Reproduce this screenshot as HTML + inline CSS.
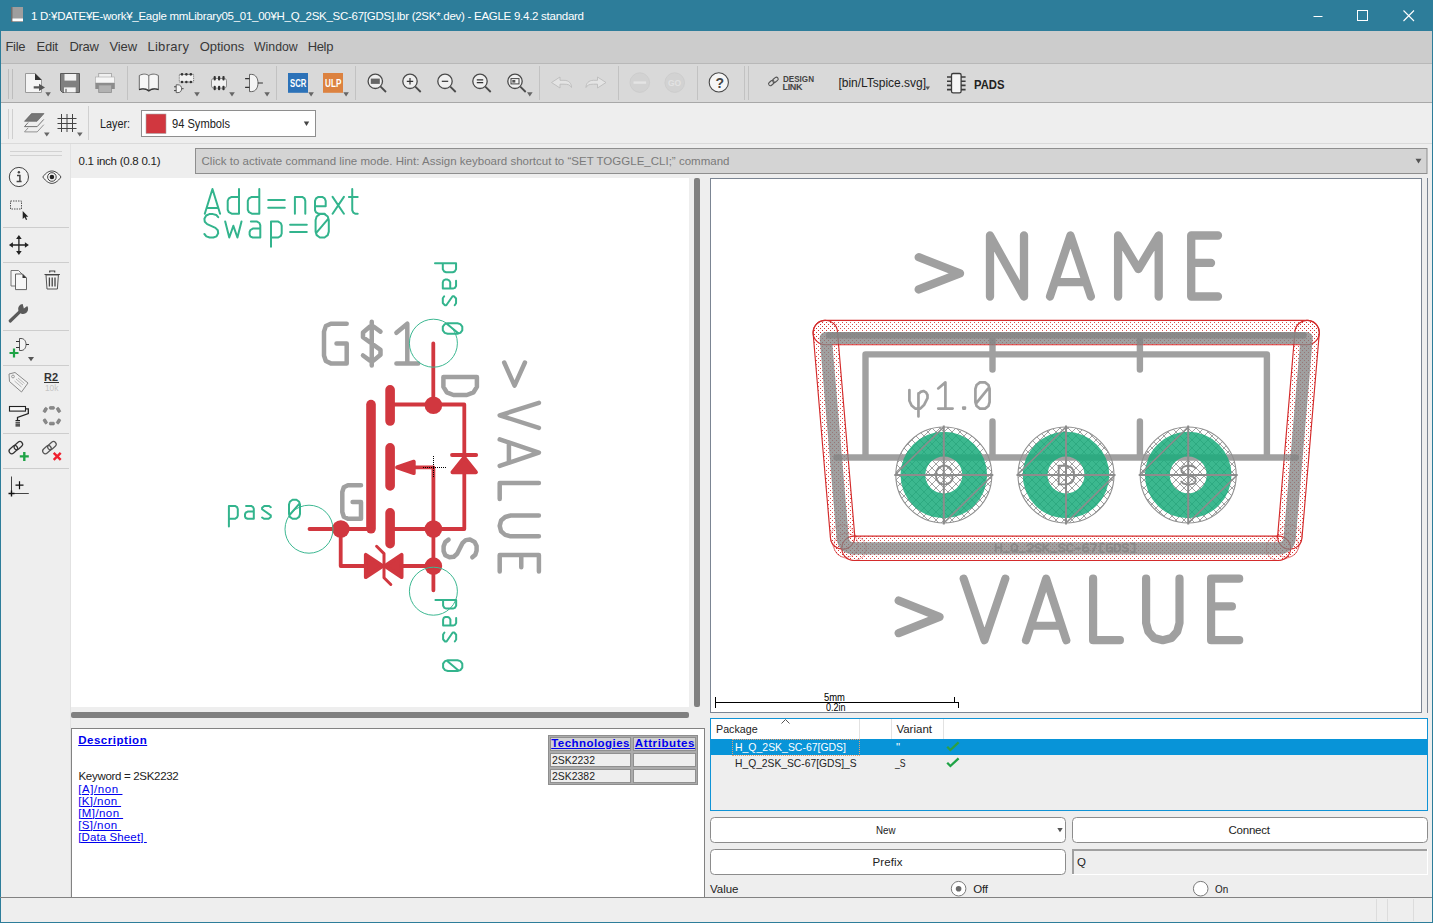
<!DOCTYPE html>
<html><head><meta charset="utf-8"><title>EAGLE</title>
<style>
html,body{margin:0;padding:0;}
body{width:1433px;height:923px;overflow:hidden;position:relative;background:#eeeeee;font-family:"Liberation Sans",sans-serif;}
.a{position:absolute;}
.t{position:absolute;white-space:pre;line-height:20px;height:20px;font-family:"Liberation Sans",sans-serif;}
svg{position:absolute;overflow:visible;}
</style></head><body>
<!-- window frame / title / menu / toolbars -->
<div class="a" style="left:0;top:0;width:1433px;height:31px;background:#2d7d9a"></div>
<div class="a" style="left:0;top:31px;width:1433px;height:33px;background:#cccccc"></div>
<div class="a" style="left:0;top:64px;width:1433px;height:38px;background:#d9d9d9"></div>
<div class="a" style="left:0;top:63px;width:1433px;height:1px;background:#b8b8b8"></div>
<div class="a" style="left:0;top:102px;width:1433px;height:1px;background:#a8a8a8"></div>
<div class="a" style="left:0;top:103px;width:1433px;height:40px;background:#eeeeee"></div>
<div class="a" style="left:0;top:143px;width:1433px;height:1px;background:#dadada"></div>
<!-- window border -->
<div class="a" style="left:0;top:0;width:1px;height:923px;background:#2d7d9a"></div>
<div class="a" style="left:1432px;top:0;width:1px;height:923px;background:#2d7d9a"></div>
<div class="a" style="left:0;top:922px;width:1433px;height:1px;background:#2d7d9a"></div>
<!-- title icon -->
<svg style="left:11px;top:7px" width="12" height="15" viewBox="0 0 12 15"><rect x="0" y="0" width="12" height="15" fill="#9e9e9e"/><rect x="0" y="0" width="1.5" height="15" fill="#6e6e6e"/><rect x="1.5" y="11.5" width="10.5" height="2.5" fill="#ffffff"/></svg>
<!-- window controls -->
<svg style="left:1300px;top:0" width="133" height="31" viewBox="0 0 133 31">
<path d="M13.5 16.5H22.5" stroke="#fff" stroke-width="1"/>
<rect x="57.5" y="10.5" width="10" height="10" fill="none" stroke="#fff" stroke-width="1"/>
<path d="M103.5 10.5L114 21M114 10.5L103.5 21" stroke="#fff" stroke-width="1.1"/>
</svg>
<!-- top toolbar icons: one overlay svg in page coordinates -->
<svg style="left:0;top:0" width="1433" height="180" viewBox="0 0 1433 180">
<defs>
<path id="dd" d="M0 0H5.6L2.8 4.2Z" fill="#666"/>
</defs>
<!-- grips -->
<path d="M8.5 69V99M12.5 69V99" stroke="#bdbdbd" stroke-width="1"/>
<path d="M8.5 109V139M12.5 109V139" stroke="#cfcfcf" stroke-width="1"/>
<!-- separators toolbar1 -->
<path d="M127.5 66V100M276.5 66V100M355.5 66V100M539.5 66V100M618.5 66V100M697.5 66V100M744.5 66V100M748.5 66V100" stroke="#c2c2c2" stroke-width="1"/>
<!-- new doc -->
<path d="M25.5 73.5H35L41.5 80V92.5H25.5Z" fill="#f4f4f4" stroke="#9a9a9a" stroke-width="1"/>
<path d="M35 73.2L41.8 80H35Z" fill="#333"/>
<path d="M33.7 86.2H39V83.8L45 87.4L39 91V88.6H33.7Z" fill="#555"/>
<use href="#dd" x="45.3" y="92.2"/>
<!-- save -->
<path d="M60.5 73.5H79.5V92.5H62.5L60.5 90.5Z" fill="#808080" stroke="#5a5a5a" stroke-width="1"/>
<rect x="64.5" y="74" width="11.7" height="6.6" fill="#f2f2f2"/>
<rect x="64" y="87.4" width="11.7" height="5" fill="#f2f2f2"/>
<rect x="65.4" y="88.8" width="1.2" height="3.6" fill="#666"/>
<!-- print -->
<rect x="98.7" y="73.5" width="12.8" height="5" fill="#f0f0f0" stroke="#a0a0a0" stroke-width="0.8"/>
<rect x="95.5" y="77" width="19" height="6" fill="#f6f6f6" stroke="#a8a8a8" stroke-width="0.6"/>
<rect x="95.3" y="83" width="19.5" height="6" fill="#8c8c8c"/>
<rect x="98.7" y="85" width="12.8" height="7.5" fill="#b2b2b2" stroke="#909090" stroke-width="0.8"/>
<!-- book -->
<path d="M139.3 75.5C143 73.5 146.5 73.8 148.8 75.6C151.2 73.8 154.7 73.5 158.4 75.5V89.3C154.7 88 151.2 88.4 148.8 90.3C146.5 88.4 143 88 139.3 89.3Z" fill="#f6f6f6" stroke="#5a5a5a" stroke-width="0.9"/>
<path d="M148.8 75.6V90.3" stroke="#5a5a5a" stroke-width="0.9"/>
<path d="M139 89.6C143 88.6 146.3 89 148.8 91C151.3 89 154.6 88.6 158.6 89.6" fill="none" stroke="#333" stroke-width="1.1"/>
<!-- board/schematic icon -->
<rect x="179.3" y="74.4" width="14.3" height="7.6" fill="#f0f0f0" stroke="#555" stroke-width="0.8" stroke-dasharray="1.2 1"/>
<g fill="#333"><circle cx="182" cy="74.3" r="1.35"/><circle cx="186.4" cy="74.3" r="1.35"/><circle cx="190.8" cy="74.3" r="1.35"/><circle cx="182" cy="82" r="1.35"/><circle cx="186.4" cy="82" r="1.35"/><circle cx="190.8" cy="82" r="1.35"/></g>
<path d="M176.2 84.8H178C180.6 84.8 181.6 86.8 181.6 88.7C181.6 90.6 180.6 92.6 178 92.6H176.2Z" fill="#f4f4f4" stroke="#444" stroke-width="0.8"/>
<path d="M174 86.8H176.2M174 90.6H176.2M181.6 88.7H183.6" stroke="#333" stroke-width="0.9"/>
<use href="#dd" x="194.2" y="92.2"/>
<!-- package icon -->
<rect x="211.5" y="78.5" width="15" height="9.6" rx="2.2" fill="#f2f2f2" stroke="#777" stroke-width="0.8"/>
<g fill="#333"><rect x="213.6" y="76" width="2.2" height="4.4" rx="1"/><rect x="218" y="76" width="2.2" height="4.4" rx="1"/><rect x="222.4" y="76" width="2.2" height="4.4" rx="1"/><rect x="213.6" y="85.8" width="2.2" height="4.4" rx="1"/><rect x="218" y="85.8" width="2.2" height="4.4" rx="1"/><rect x="222.4" y="85.8" width="2.2" height="4.4" rx="1"/></g>
<use href="#dd" x="229.2" y="92.2"/>
<!-- gate icon -->
<path d="M249.5 74.4H251.5C256 74.4 258 78.8 258 83C258 87.2 256 91.6 251.5 91.6H249.5Z" fill="#f4f4f4" stroke="#555" stroke-width="0.9"/>
<path d="M245.1 78.6H249.5M245.1 87.4H249.5M258 83H262.9" stroke="#333" stroke-width="1.1"/>
<use href="#dd" x="264.3" y="92.2"/>
<!-- SCR / ULP -->
<rect x="288" y="73" width="20" height="19.8" fill="#2c72b8"/>
<rect x="323" y="73" width="20" height="19.8" fill="#dc8240"/>
<use href="#dd" x="308.3" y="92.2"/>
<use href="#dd" x="343.3" y="92.2"/>
<!-- zoom icons -->
<g fill="none" stroke="#4a4a4a" stroke-width="1.3">
<circle cx="375.3" cy="81.3" r="7.2" fill="#efefef"/><path d="M380.6 86.6L386 92" stroke-width="1.8"/>
<circle cx="410" cy="81.3" r="7.2" fill="#efefef"/><path d="M415.3 86.6L420.7 92" stroke-width="1.8"/>
<circle cx="445" cy="81.3" r="7.2" fill="#efefef"/><path d="M450.3 86.6L455.7 92" stroke-width="1.8"/>
<circle cx="480" cy="81.3" r="7.2" fill="#efefef"/><path d="M485.3 86.6L490.7 92" stroke-width="1.8"/>
<circle cx="515" cy="81.3" r="7.2" fill="#efefef"/><path d="M520.3 86.6L525.7 92" stroke-width="1.8"/>
</g>
<rect x="370.8" y="78.6" width="9" height="5.3" fill="#666"/>
<path d="M406.8 81.3H413.2M410 78.1V84.5" stroke="#333" stroke-width="1.2"/>
<path d="M441.8 81.3H448.2" stroke="#333" stroke-width="1.2"/>
<path d="M476.8 79.9H483.2M476.8 82.7H483.2" stroke="#333" stroke-width="1.2"/>
<rect x="511" y="78.6" width="8" height="5.3" fill="#f4f4f4" stroke="#444" stroke-width="1"/><rect x="512.3" y="80" width="3" height="2.6" fill="#555"/>
<use href="#dd" x="527" y="92.2"/>
<!-- undo / redo (disabled) -->
<path transform="translate(0 1)" d="M551.5 81.5L560 76V79.3H564C569 79.3 571.5 82.5 571.5 86.5C570 83.8 568 83.2 564 83.2H560V87Z" fill="#e4e4e4" stroke="#bcbcbc" stroke-width="0.9"/>
<path transform="translate(0 1)" d="M606 81.5L597.5 76V79.3H593.5C588.5 79.3 586 82.5 586 86.5C587.5 83.8 589.5 83.2 593.5 83.2H597.5V87Z" fill="#e4e4e4" stroke="#bcbcbc" stroke-width="0.9"/>
<!-- stop / go (disabled) -->
<circle cx="639.8" cy="82.6" r="9.8" fill="#d2d2d2" stroke="#cacaca" stroke-width="0.8"/><rect x="633.5" y="81.4" width="12.6" height="2.4" fill="#e4e4e4"/>
<circle cx="674.7" cy="82.6" r="9.8" fill="#d2d2d2" stroke="#cacaca" stroke-width="0.8"/>
<!-- help -->
<circle cx="718.8" cy="82.4" r="9.6" fill="#f6f6f6" stroke="#4a4a4a" stroke-width="1.1"/>
<!-- design link icon -->
<g fill="none" stroke="#555" stroke-width="1.1"><rect x="768.3" y="81.2" width="6.2" height="3.6" rx="1.8" transform="rotate(-40 771.4 83)"/><rect x="772.3" y="78" width="6.2" height="3.6" rx="1.8" transform="rotate(-40 775.4 79.8)"/></g>
<!-- ltspice dropdown -->
<path d="M925.4 86.6H930L927.7 90Z" fill="#555"/>
<!-- PADS icon -->
<rect x="951.5" y="73.5" width="9.6" height="19.4" rx="1.6" fill="#f6f6f6" stroke="#3c3c3c" stroke-width="1.3"/>
<path d="M947 77H951.5M947 81.2H951.5M947 85.4H951.5M947 89.6H951.5M961 77H965.6M961 81.2H965.6M961 85.4H965.6M961 89.6H965.6" stroke="#3c3c3c" stroke-width="1.6"/>
<!-- toolbar2: layers icon -->
<path d="M24.5 121.3L31.5 113.6H44L37 121.3Z" fill="#777" stroke="#555" stroke-width="0.6"/>
<path d="M24.5 126.6L28.2 122.5M37.2 126.6L43.8 119.4M24.5 126.6H37.2" fill="none" stroke="#666" stroke-width="0.9"/>
<path d="M24.5 131.9L28.2 127.8M37.2 131.9L43.8 124.7M24.5 131.9H37.2" fill="none" stroke="#888" stroke-width="0.9"/>
<use href="#dd" x="44" y="132.4"/>
<!-- grid icon -->
<path d="M61.5 114V132M67 114V132M72.5 114V132M57.5 118.5H76.5M57.5 123.5H76.5M57.5 128.5H76.5" stroke="#444" stroke-width="1"/>
<use href="#dd" x="77" y="132.4"/>
<path d="M88.5 106V140" stroke="#d0d0d0" stroke-width="1"/>
<!-- layer combo -->
<rect x="141.5" y="110.5" width="174" height="26" fill="#fff" stroke="#8e8e8e" stroke-width="1"/>
<rect x="146" y="114" width="20" height="19.5" fill="#d1373f" stroke="#a8a8a8" stroke-width="0.6"/>
<path d="M303.8 121.6H309.2L306.5 126Z" fill="#444"/>
<!-- command line -->
<rect x="195.500" y="148.5" width="1231.5" height="25" fill="#d4d4d4" stroke="#8e8e8e" stroke-width="1"/>
<path d="M1415.5 158.8H1421.5L1418.5 163.6Z" fill="#555"/>
</svg>
<!-- left tool palette -->
<svg style="left:0;top:0" width="80" height="923" viewBox="0 0 80 923">
<path d="M10 151.500H62M10 155.500H62" stroke="#d2d2d2" stroke-width="1"/>
<path d="M3 227.500H69M3 262.500H69M3 330.500H69M3 365.500H69M3 433.500H69M3 468.500H69" stroke="#cdcdcd" stroke-width="1"/>
<path d="M70.500 144V897" stroke="#e2e2e2" stroke-width="1"/>
<!-- info -->
<circle cx="18.9" cy="177" r="9.6" fill="#f4f4f4" stroke="#444" stroke-width="1"/>
<circle cx="18.9" cy="172.200" r="1.2" fill="#444"/>
<path d="M17 175.400H19.900V181.400M16.600 181.600H21.600" stroke="#444" stroke-width="1.5" fill="none"/>
<!-- eye -->
<path d="M42.800 177C46 172.300 49.500 171 51.900 171C54.300 171 57.800 172.300 61 177C57.800 181.700 54.300 183.400 51.900 183.400C49.500 183.400 46 181.700 42.800 177Z" fill="#f4f4f4" stroke="#444" stroke-width="1"/>
<circle cx="51.900" cy="177" r="4.300" fill="none" stroke="#444" stroke-width="1"/>
<circle cx="51.900" cy="177" r="2.300" fill="#222"/>
<!-- select -->
<rect x="10.500" y="201" width="11" height="8" fill="none" stroke="#555" stroke-width="1" stroke-dasharray="1.500 1"/>
<path d="M22.700 211V219L24.600 217.200L26 220L27.200 219.400L25.800 216.700H28.300Z" fill="#222"/>
<!-- move -->
<path d="M18.900 237V253M10.900 245H26.900" stroke="#222" stroke-width="1.300"/>
<path d="M18.900 235L21.700 239H16.100ZM18.900 255L21.700 251H16.100ZM8.900 245L12.900 242.200V247.800ZM28.900 245L24.900 242.200V247.800Z" fill="#222"/>
<!-- copy -->
<path d="M11 270.500H18.500L22 274V286H11Z" fill="#f4f4f4" stroke="#666" stroke-width="0.9"/>
<path d="M15.500 274H22.500L26.500 278V289.600H15.500Z" fill="#f6f6f6" stroke="#555" stroke-width="0.9"/>
<path d="M22.500 274L26.500 278H22.500Z" fill="#333"/>
<!-- trash -->
<path d="M46 275H58.400L57.400 289H47Z" fill="#f2f2f2" stroke="#555" stroke-width="1"/>
<path d="M44.500 274.500H59.900M49.700 272.500V271H54.700V272.500" stroke="#444" stroke-width="1.200" fill="none"/>
<path d="M49.400 277.500V286.500M52.200 277.500V286.500M55 277.500V286.500" stroke="#444" stroke-width="1.300"/>
<!-- wrench -->
<path d="M10.200 321L21.500 310.200" stroke="#5a5a5a" stroke-width="3.200" stroke-linecap="round"/>
<path d="M26.800 305.500A5 5 0 1 1 22 304L23.800 308.500L26.800 305.500Z" fill="#5a5a5a" transform="rotate(8 23 309)"/>
<!-- add gate -->
<path d="M19.500 338.500H21C24.500 338.500 26 341.500 26 344.500C26 347.500 24.500 350.500 21 350.500H19.500Z" fill="#f4f4f4" stroke="#444" stroke-width="0.9"/>
<path d="M16 341.500H19.500M16 347.500H19.500M26 344.500H29" stroke="#333" stroke-width="1"/>
<path d="M9.500 353H18.500M14 348.500V357.500" stroke="#1fa346" stroke-width="2.200"/>
<path d="M28 357H34L31 361.300Z" fill="#555"/>
<!-- tag -->
<path d="M9 374L15 372.500L28 383L21.500 392L9.500 381.500Z" fill="#f2f2f2" stroke="#8a8a8a" stroke-width="1"/>
<circle cx="13" cy="376.500" r="1.400" fill="none" stroke="#888" stroke-width="0.800"/>
<path d="M16 379L23 385M14.500 381L21.500 387M18 378L24.500 383.500" stroke="#aaa" stroke-width="0.800"/>
<!-- R2 underline -->
<path d="M44 382.500H59" stroke="#333" stroke-width="1"/>
<!-- paint roller -->
<rect x="9.500" y="406.500" width="16" height="4.600" fill="#f6f6f6" stroke="#222" stroke-width="1.100"/>
<path d="M25.500 408.800H28.300V413.500L17.500 417.500V420" fill="none" stroke="#222" stroke-width="1.300"/>
<path d="M15.500 420.500H20M15.500 422.300H20M15.500 424.100H20M15.500 425.900H20" stroke="#222" stroke-width="1.100"/>
<!-- dotted polygon -->
<g fill="#8a8a8a" stroke="#666" stroke-width="0.5"><rect x="49.400" y="406.500" width="5" height="2.800" rx="0.800"/><rect x="49.400" y="422.200" width="5" height="2.800" rx="0.800"/><rect x="42.800" y="408.600" width="5" height="2.800" rx="0.800" transform="rotate(-60 45.300 410)"/><rect x="56" y="408.600" width="5" height="2.800" rx="0.800" transform="rotate(60 58.500 410)"/><rect x="42.800" y="420" width="5" height="2.800" rx="0.800" transform="rotate(60 45.300 421.400)"/><rect x="56" y="420" width="5" height="2.800" rx="0.800" transform="rotate(-60 58.500 421.400)"/></g>
<!-- link + -->
<g fill="none" stroke="#333" stroke-width="1.200"><rect x="8.600" y="447" width="9.500" height="5.400" rx="2.700" transform="rotate(-42 13.300 449.700)"/><rect x="13.600" y="443" width="9.500" height="5.400" rx="2.700" transform="rotate(-42 18.300 445.700)"/></g>
<path d="M19.800 456.400H28.800M24.300 451.900V460.900" stroke="#1fa346" stroke-width="2.400"/>
<!-- link x -->
<g fill="none" stroke="#555" stroke-width="1.200"><rect x="42.200" y="447" width="9.500" height="5.400" rx="2.700" transform="rotate(-42 46.900 449.700)"/><rect x="47.200" y="443" width="9.500" height="5.400" rx="2.700" transform="rotate(-42 51.900 445.700)"/></g>
<path d="M53.700 452.900L60.700 459.900M60.700 452.900L53.700 459.900" stroke="#f0202e" stroke-width="2.400"/>
<!-- origin mark -->
<path d="M11.500 476.500V496M9.500 493.500H28.800" stroke="#444" stroke-width="1"/>
<path d="M15.500 485.200H23.500M19.500 481.200V489.200" stroke="#111" stroke-width="1.200"/>
<path d="M8.500 493.500H14.500M11.500 490.500V496.500" stroke="#111" stroke-width="1.400"/>
</svg>
<!-- left canvas (symbol) -->
<div class="a" style="left:71px;top:178px;width:618px;height:529px;background:#fff"></div>
<div class="a" style="left:694px;top:178px;width:6px;height:529px;background:#808080;border-radius:2px"></div>
<div class="a" style="left:71px;top:712px;width:618px;height:6px;background:#808080;border-radius:2px"></div>
<svg style="left:0;top:0" width="720" height="720" viewBox="0 0 720 720">
<path d="M346.70 323.70L330.81 323.70L325.82 326.08L324.00 331.64L324.00 355.46L325.82 361.02L330.81 363.40L346.70 363.40L346.70 343.55L336.49 343.55M380.50 331.64L373.50 326.48L370.00 326.48L363.00 332.43L363.00 337.20L380.50 349.90L380.50 354.67L373.50 360.62L370.00 360.62L363.00 355.46M371.75 321.71L371.75 365.38M396.40 332.83L407.30 323.70L407.30 363.40M396.40 363.40L418.20 363.40" fill="none" stroke="#a0a0a0" stroke-width="4.5" stroke-linecap="round" stroke-linejoin="round" />
<path d="M524.94 362.50L514.56 385.60L504.21 362.50M538.90 402.80L499.70 415.35L538.90 427.90M499.70 439.40L538.90 452.65L499.70 465.90M508.91 442.53L508.91 462.77M538.90 483.00L499.70 483.00L499.70 498.90M538.90 515.50L510.68 515.50L505.19 516.96L501.07 520.49L499.70 525.90L501.07 531.31L505.19 534.84L510.68 536.30L538.90 536.30M538.90 571.50L538.90 555.00L499.70 555.00L499.70 571.50M521.26 555.00L521.26 567.21" fill="none" stroke="#a0a0a0" stroke-width="4.5" stroke-linecap="round" stroke-linejoin="round" />
<path d="M476.90 377.00L443.40 377.00L443.40 386.90L446.75 392.30L453.45 395.00L466.85 395.00L473.55 392.30L476.90 386.90L476.90 377.00" fill="none" stroke="#a0a0a0" stroke-width="4.5" stroke-linecap="round" stroke-linejoin="round" />
<path d="M472.31 557.30L475.28 554.82L476.60 550.57L476.60 545.97L474.62 541.90L470.00 539.60L465.71 540.13L462.41 543.14L457.13 553.76L453.83 556.77L449.54 557.30L445.25 555.18L443.60 551.11L443.60 546.33L445.25 542.08L448.55 539.60" fill="none" stroke="#a0a0a0" stroke-width="4.5" stroke-linecap="round" stroke-linejoin="round" />
<path d="M361.00 485.30L347.91 485.30L343.80 487.30L342.30 491.98L342.30 512.02L343.80 516.70L347.91 518.70L361.00 518.70L361.00 502.00L352.59 502.00" fill="none" stroke="#a0a0a0" stroke-width="4.5" stroke-linecap="round" stroke-linejoin="round" />
<g stroke="#d1373f" fill="none" stroke-linecap="round" stroke-linejoin="round">
<path d="M371 404.6V528.8" stroke-width="9.6"/>
<path d="M390.1 389.8V421M390.1 447.9V485.9M390.1 512.8V543.7" stroke-width="9.6"/>
<path d="M433.3 343.3V404.5M392 404.5H464.3V529H392M309.5 529H371M415 467.4H433.4V590.3M340.7 529V566H433.4" stroke-width="3.8"/>
<path d="M452 455H476.2" stroke-width="3.8"/>
<path d="M464.2 457.5L476 472.3H452.4Z" fill="#d1373f" stroke-width="3.8"/>
<path d="M397 467.4L413.8 461.6V473.2Z" fill="#d1373f" stroke-width="3.8"/>
<path d="M382.8 566L365.8 554.8V577.2Z" fill="#d1373f" stroke-width="3.8"/>
<path d="M384.8 566L401.6 554.8V577.2Z" fill="#d1373f" stroke-width="3.8"/>
<path d="M376.6 546.3L384 553.6V577.8L390.8 584.5" stroke-width="3"/>
</g>
<circle cx="433.4" cy="405.2" r="8.8" fill="#d1373f"/>
<circle cx="340.8" cy="529" r="8.8" fill="#d1373f"/>
<circle cx="433.4" cy="529" r="8.8" fill="#d1373f"/>
<circle cx="433.4" cy="566.1" r="8.8" fill="#d1373f"/>
<circle cx="433.4" cy="343.2" r="24" fill="none" stroke="#3db892" stroke-width="1"/>
<circle cx="309" cy="529.2" r="24" fill="none" stroke="#3db892" stroke-width="1"/>
<circle cx="433.4" cy="591.2" r="24" fill="none" stroke="#3db892" stroke-width="1"/>
<path d="M204.80 213.70L212.45 189.00L220.10 213.70M206.61 207.90L218.29 207.90M239.00 189.00L239.00 213.70M239.00 196.90L231.66 196.90L228.83 198.39L227.70 200.86L227.70 209.75L228.83 212.22L231.66 213.70L239.00 213.70M259.30 189.00L259.30 213.70M259.30 196.90L251.83 196.90L248.95 198.39L247.80 200.86L247.80 209.75L248.95 212.22L251.83 213.70L259.30 213.70M268.20 200.12L284.80 200.12M268.20 207.77L284.80 207.77M294.90 213.70L294.90 196.90L302.18 196.90L304.47 198.39L305.30 200.86L305.30 213.70M315.00 206.29L325.70 206.29L325.70 200.86L324.63 198.39L322.28 196.90L318.42 196.90L316.07 198.39L315.00 200.86L315.00 210.24L316.07 212.47L318.42 213.70L324.63 213.70M332.60 196.90L343.90 213.70M343.90 196.90L332.60 213.70M352.24 189.00L352.24 210.24L353.30 212.71L355.06 213.70L357.70 213.70M348.90 196.90L357.70 196.90" fill="none" stroke="#33b48d" stroke-width="2.0" stroke-linecap="round" stroke-linejoin="round" />
<path d="M218.20 217.14L216.27 215.04L212.96 214.10L209.37 214.10L206.19 215.50L204.40 218.78L204.81 221.82L207.16 224.16L215.44 227.91L217.79 230.25L218.20 233.29L216.54 236.33L213.37 237.50L209.64 237.50L206.33 236.33L204.40 233.99M225.20 221.59L229.27 237.50L233.35 225.80L237.42 237.50L241.50 221.59M250.88 221.59L257.09 221.59L259.44 222.99L260.30 225.33L260.30 237.50M260.30 228.61L252.81 228.61L250.46 230.01L249.60 231.88L249.60 234.69L250.46 236.56L252.81 237.50L260.30 237.50M271.00 221.59L271.00 246.86M271.00 221.59L278.28 221.59L280.84 223.23L281.70 225.57L281.70 233.52L280.84 235.86L278.28 237.50L271.00 237.50M290.10 224.63L306.80 224.63M290.10 231.88L306.80 231.88M319.82 214.10L324.58 214.10L327.74 216.44L328.80 219.95L328.80 231.65L327.74 235.16L324.58 237.50L319.82 237.50L316.66 235.16L315.60 231.65L315.60 219.95L316.66 216.44L319.82 214.10M328.14 218.78L316.26 232.82" fill="none" stroke="#33b48d" stroke-width="2.0" stroke-linecap="round" stroke-linejoin="round" />
<path d="M228.90 505.88L228.90 526.40M228.90 505.88L234.95 505.88L237.09 507.21L237.80 509.11L237.80 515.57L237.09 517.47L234.95 518.80L228.90 518.80M246.06 505.88L251.16 505.88L253.10 507.02L253.80 508.92L253.80 518.80M253.80 511.58L247.64 511.58L245.70 512.72L245.00 514.24L245.00 516.52L245.70 518.04L247.64 518.80L253.80 518.80M270.80 507.21L268.89 505.88L264.28 505.88L262.10 507.78L262.10 509.30L270.80 515.38L270.80 516.90L268.62 518.80L264.01 518.80L262.10 517.47M292.52 499.80L296.48 499.80L299.12 501.70L300.00 504.55L300.00 514.05L299.12 516.90L296.48 518.80L292.52 518.80L289.88 516.90L289.00 514.05L289.00 504.55L289.88 501.70L292.52 499.80M299.45 503.60L289.55 515.00" fill="none" stroke="#33b48d" stroke-width="2" stroke-linecap="round" stroke-linejoin="round" />
<path d="M456.06 263.20L435.00 263.20M456.06 263.20L456.06 269.32L454.69 271.48L452.75 272.20L446.12 272.20L444.17 271.48L442.80 269.32L442.80 263.20M456.06 280.68L456.06 285.90L454.89 287.88L452.94 288.60L442.80 288.60M450.21 288.60L450.21 282.30L449.04 280.32L447.48 279.60L445.14 279.60L443.58 280.32L442.80 282.30L442.80 288.60M454.69 305.20L456.06 303.24L456.06 298.53L454.11 296.30L452.55 296.30L446.31 305.20L444.75 305.20L442.80 302.98L442.80 298.26L444.17 296.30M462.30 326.63L462.30 330.37L460.35 332.87L457.43 333.70L447.68 333.70L444.75 332.87L442.80 330.37L442.80 326.63L444.75 324.13L447.68 323.30L457.43 323.30L460.35 324.13L462.30 326.63M458.40 333.18L446.70 323.82" fill="none" stroke="#33b48d" stroke-width="2" stroke-linecap="round" stroke-linejoin="round" />
<path d="M456.16 599.90L435.42 599.90M456.16 599.90L456.16 605.82L454.81 607.90L452.89 608.60L446.36 608.60L444.44 607.90L443.10 605.82L443.10 599.90M456.16 618.03L456.16 623.02L455.00 624.91L453.08 625.60L443.10 625.60M450.40 625.60L450.40 619.58L449.24 617.69L447.71 617.00L445.40 617.00L443.87 617.69L443.10 619.58L443.10 625.60M454.81 641.50L456.16 639.52L456.16 634.75L454.24 632.50L452.70 632.50L446.56 641.50L445.02 641.50L443.10 639.25L443.10 634.48L444.44 632.50M462.30 663.72L462.30 667.58L460.38 670.14L457.50 671.00L447.90 671.00L445.02 670.14L443.10 667.58L443.10 663.72L445.02 661.16L447.90 660.30L457.50 660.30L460.38 661.16L462.30 663.72M458.46 670.46L446.94 660.83" fill="none" stroke="#33b48d" stroke-width="2" stroke-linecap="round" stroke-linejoin="round" />
<path d="M422.500 467.500H446M433.500 455.500V478" stroke="#000" stroke-width="1" stroke-dasharray="1 1" shape-rendering="crispEdges"/>
</svg>
<!-- right canvas (package) -->
<div class="a" style="left:710px;top:178px;width:710px;height:533px;background:#fff;border:1px solid #7b8593"></div>
<div class="a" style="left:1427px;top:178px;width:1px;height:535px;background:#7b8593"></div>
<svg style="left:0;top:0" width="1433" height="720" viewBox="0 0 1433 720">
<defs>
<pattern id="dots" x="0" y="0" width="4" height="4" patternUnits="userSpaceOnUse"><rect x="0" y="0" width="1" height="1" fill="#d42b2b" fill-opacity="0.85"/><rect x="2" y="2" width="1" height="1" fill="#d42b2b" fill-opacity="0.85"/></pattern>
<pattern id="hatch" x="0" y="0" width="8" height="8" patternUnits="userSpaceOnUse">
<rect x="0" y="0" width="1" height="1" fill="#a2a2a2"/>
<rect x="0" y="7" width="1" height="1" fill="#a2a2a2"/>
<rect x="1" y="1" width="1" height="1" fill="#a2a2a2"/>
<rect x="1" y="6" width="1" height="1" fill="#a2a2a2"/>
<rect x="2" y="2" width="1" height="1" fill="#a2a2a2"/>
<rect x="2" y="5" width="1" height="1" fill="#a2a2a2"/>
<rect x="3" y="3" width="1" height="1" fill="#a2a2a2"/>
<rect x="3" y="4" width="1" height="1" fill="#a2a2a2"/>
<rect x="4" y="3" width="1" height="1" fill="#a2a2a2"/>
<rect x="4" y="4" width="1" height="1" fill="#a2a2a2"/>
<rect x="5" y="2" width="1" height="1" fill="#a2a2a2"/>
<rect x="5" y="5" width="1" height="1" fill="#a2a2a2"/>
<rect x="6" y="1" width="1" height="1" fill="#a2a2a2"/>
<rect x="6" y="6" width="1" height="1" fill="#a2a2a2"/>
<rect x="7" y="0" width="1" height="1" fill="#a2a2a2"/>
<rect x="7" y="7" width="1" height="1" fill="#a2a2a2"/>
</pattern></defs>
<g fill="url(#dots)" stroke="#d42b2b" stroke-width="1.15">
<path d="M825.30 344.70L1307.10 344.70A12.2 12.2 0 0 0 1307.10 320.30L825.30 320.30A12.2 12.2 0 0 0 825.30 344.70Z"/>
<path d="M813.14 333.53L830.44 538.03A12.2 12.2 0 0 0 854.76 535.97L837.46 331.47A12.2 12.2 0 0 0 813.14 333.53Z"/>
<path d="M1294.94 331.47L1277.64 535.97A12.2 12.2 0 0 0 1301.96 538.03L1319.26 333.53A12.2 12.2 0 0 0 1294.94 331.47Z"/>
<path d="M854.00 560.50L1278.40 560.50A12.2 12.2 0 0 0 1278.40 536.10L854.00 536.10A12.2 12.2 0 0 0 854.00 560.50Z"/>
<path d="M831.24 541.46L834.57 549.93A12.2 12.2 0 0 0 857.28 541.02L853.96 532.54A12.2 12.2 0 0 0 831.24 541.46Z" stroke-opacity="0.45" stroke-width="0.9"/>
<path d="M1278.44 532.54L1275.12 541.02A12.2 12.2 0 0 0 1297.83 549.93L1301.16 541.46A12.2 12.2 0 0 0 1278.44 532.54Z" stroke-opacity="0.45" stroke-width="0.9"/>
<path d="M841.90 556.99L849.97 559.82A12.2 12.2 0 0 0 858.03 536.78L849.96 533.96A12.2 12.2 0 0 0 841.90 556.99Z" stroke-opacity="0.45" stroke-width="0.9"/>
<path d="M1282.44 533.96L1274.37 536.78A12.2 12.2 0 0 0 1282.43 559.82L1290.50 556.99A12.2 12.2 0 0 0 1282.44 533.96Z" stroke-opacity="0.45" stroke-width="0.9"/>
</g>
<g opacity="0.77"><path d="M825.77 338.00L842.60 537.00L842.99 539.65L843.67 541.94L844.65 543.89L845.93 545.47L847.50 546.71L849.37 547.59L851.54 548.12L854.00 548.30L1278.40 548.30L1280.86 548.12L1283.03 547.59L1284.90 546.71L1286.47 545.47L1287.75 543.89L1288.73 541.94L1289.41 539.65L1289.80 537.00L1306.63 338.00L825.77 338.00Z" fill="none" stroke="#848484" stroke-width="12.2" stroke-linejoin="round" stroke-linecap="round"/></g>
<g opacity="0.77"><path d="M829 335.4H1303.4M865.5 457.5V354.4H1266.9V457.5M836.5 457.5H1295.9M992.5 338V369.5M992.5 421.5V457.5M1139.9 338V369.5M1139.9 421.5V457.5" fill="none" stroke="#848484" stroke-width="6.4" stroke-linejoin="round" stroke-linecap="round"/></g>
<g opacity="0.77"><path d="M995.80 544.10L995.80 551.50M1001.20 544.10L1001.20 551.50M995.80 547.80L1001.20 547.80M1003.73 552.09L1009.13 552.09M1013.28 544.10L1015.44 544.10L1017.06 545.58L1017.06 550.02L1015.44 551.50L1013.28 551.50L1011.66 550.02L1011.66 545.58L1013.28 544.10M1014.90 549.65L1017.06 552.09M1019.59 552.09L1024.99 552.09M1027.52 545.43L1028.87 544.10L1031.57 544.10L1032.92 545.43L1032.92 547.06L1027.52 551.50L1032.92 551.50M1040.85 545.06L1040.09 544.40L1038.80 544.10L1037.39 544.10L1036.15 544.54L1035.45 545.58L1035.61 546.54L1036.53 547.28L1039.77 548.47L1040.69 549.21L1040.85 550.17L1040.20 551.13L1038.96 551.50L1037.50 551.50L1036.21 551.13L1035.45 550.39M1043.38 544.10L1043.38 551.50M1048.78 544.10L1043.38 548.54M1045.00 547.43L1048.78 551.50M1051.31 552.09L1056.71 552.09M1064.64 545.06L1063.88 544.40L1062.59 544.10L1061.18 544.10L1059.94 544.54L1059.24 545.58L1059.40 546.54L1060.32 547.28L1063.56 548.47L1064.48 549.21L1064.64 550.17L1063.99 551.13L1062.75 551.50L1061.29 551.50L1060.00 551.13L1059.24 550.39M1072.57 545.21L1071.22 544.10L1068.68 544.10L1067.17 545.58L1067.17 550.02L1068.68 551.50L1071.22 551.50L1072.57 550.39M1075.37 548.54L1080.23 548.54M1087.89 544.47L1086.27 544.10L1084.65 544.10L1083.03 545.95L1083.03 550.02L1084.38 551.50L1087.08 551.50L1088.43 550.39L1088.43 548.54L1087.08 547.43L1084.38 547.43L1083.03 548.54M1090.96 544.10L1096.36 544.10L1092.85 551.50M1103.59 543.73L1100.39 543.73L1100.39 552.24L1103.59 552.24M1112.22 544.10L1108.44 544.10L1107.25 544.54L1106.82 545.58L1106.82 550.02L1107.25 551.06L1108.44 551.50L1112.22 551.50L1112.22 547.80L1109.79 547.80M1114.75 544.10L1114.75 551.50L1117.72 551.50L1119.34 550.76L1120.15 549.28L1120.15 546.32L1119.34 544.84L1117.72 544.10L1114.75 544.10M1128.08 545.06L1127.32 544.40L1126.03 544.10L1124.62 544.10L1123.38 544.54L1122.68 545.58L1122.84 546.54L1123.76 547.28L1127.00 548.47L1127.92 549.21L1128.08 550.17L1127.43 551.13L1126.19 551.50L1124.73 551.50L1123.44 551.13L1122.68 550.39M1131.41 543.73L1134.61 543.73L1134.61 552.24L1131.41 552.24" fill="none" stroke="#848484" stroke-width="1.9" stroke-linecap="round" stroke-linejoin="round" /></g>
<path d="M918.70 257.22L960.00 273.38L918.70 289.49M990.00 296.50L990.00 235.50L1024.00 296.50L1024.00 235.50M1050.00 296.50L1070.45 235.50L1090.90 296.50M1054.83 282.17L1086.07 282.17M1118.10 296.50L1118.10 235.50L1138.40 269.05L1158.70 235.50L1158.70 296.50M1218.00 235.50L1191.20 235.50L1191.20 296.50L1218.00 296.50M1191.20 262.95L1211.03 262.95" fill="none" stroke="#a0a0a0" stroke-width="8.3" stroke-linecap="round" stroke-linejoin="round" />
<path d="M898.70 600.59L939.50 616.89L898.70 633.13M963.70 578.70L984.50 640.20L1005.30 578.70M1026.00 640.20L1046.15 578.70L1066.30 640.20M1030.76 625.75L1061.54 625.75M1093.10 578.70L1093.10 640.20L1119.90 640.20M1146.10 578.70L1146.10 622.98L1148.44 631.59L1154.12 638.05L1162.80 640.20L1171.48 638.05L1177.16 631.59L1179.50 622.98L1179.50 578.70M1239.20 578.70L1211.10 578.70L1211.10 640.20L1239.20 640.20M1211.10 606.38L1231.89 606.38" fill="none" stroke="#a0a0a0" stroke-width="8.2" stroke-linecap="round" stroke-linejoin="round" />
<path d="M909.40 390.00L909.40 400.74L911.57 405.46L915.19 408.60L920.26 408.60L924.24 404.67L927.50 398.12L927.50 394.98L926.05 392.36L923.52 391.05L920.62 391.83L918.45 394.19M918.45 393.40L918.45 416.46M938.20 388.43L945.40 382.40L945.40 408.60M938.20 408.60L952.60 408.60M963.20 407.55L965.00 407.55M963.20 408.60L965.00 408.60M979.94 382.40L985.06 382.40L988.46 385.02L989.60 388.95L989.60 402.05L988.46 405.98L985.06 408.60L979.94 408.60L976.54 405.98L975.40 402.05L975.40 388.95L976.54 385.02L979.94 382.40M988.89 387.64L976.11 403.36" fill="none" stroke="#a0a0a0" stroke-width="2.7" stroke-linecap="round" stroke-linejoin="round" />
<circle cx="943.8" cy="475.0" r="48" fill="url(#hatch)" stroke="none"/>
<path d="M951.52 469.89L949.38 467.29L946.08 465.80L942.45 465.80L938.82 467.66L936.51 471.01L935.85 475.10L936.51 479.19L938.82 482.54L942.45 484.40L946.08 484.40L949.87 482.54L952.35 479.75L952.35 475.47L944.92 475.47" fill="none" stroke="#8a8a8a" stroke-width="1.9" stroke-linecap="round" stroke-linejoin="round" />
<path d="M987.0999999999999 475.0A43.3 43.3 0 1 0 900.5 475.0A43.3 43.3 0 1 0 987.0999999999999 475.0ZM962.3 475.0A18.5 18.5 0 1 1 925.3 475.0A18.5 18.5 0 1 1 962.3 475.0Z" fill="#1aab7b" fill-opacity="0.85" fill-rule="evenodd"/>
<circle cx="943.8" cy="475.0" r="48" fill="none" stroke="#909090" stroke-width="1.1"/>
<path d="M943.8 425.5V524.5M894.3 475.0H993.3" stroke="#8c8c8c" stroke-width="2" fill="none"/>
<path d="M943.8 427.0L895.8 474.0M991.8 476.0L943.8 523.0" stroke="#8c8c8c" stroke-width="1.6" fill="none"/>
<circle cx="1066.0" cy="475.0" r="48" fill="url(#hatch)" stroke="none"/>
<path d="M1058.70 465.80L1058.70 484.40L1067.06 484.40L1071.62 482.54L1073.90 478.82L1073.90 471.38L1071.62 467.66L1067.06 465.80L1058.70 465.80" fill="none" stroke="#8a8a8a" stroke-width="1.9" stroke-linecap="round" stroke-linejoin="round" />
<path d="M1109.3 475.0A43.3 43.3 0 1 0 1022.7 475.0A43.3 43.3 0 1 0 1109.3 475.0ZM1084.5 475.0A18.5 18.5 0 1 1 1047.5 475.0A18.5 18.5 0 1 1 1084.5 475.0Z" fill="#1aab7b" fill-opacity="0.85" fill-rule="evenodd"/>
<circle cx="1066.0" cy="475.0" r="48" fill="none" stroke="#909090" stroke-width="1.1"/>
<path d="M1066.0 425.5V524.5M1016.5 475.0H1115.5" stroke="#8c8c8c" stroke-width="2" fill="none"/>
<path d="M1066.0 427.0L1018.0 474.0M1114.0 476.0L1066.0 523.0" stroke="#8c8c8c" stroke-width="1.6" fill="none"/>
<circle cx="1188.2" cy="475.0" r="48" fill="url(#hatch)" stroke="none"/>
<path d="M1195.75 468.22L1193.72 466.54L1190.24 465.80L1186.47 465.80L1183.13 466.92L1181.25 469.52L1181.68 471.94L1184.15 473.80L1192.85 476.77L1195.32 478.63L1195.75 481.05L1194.01 483.47L1190.67 484.40L1186.76 484.40L1183.28 483.47L1181.25 481.61" fill="none" stroke="#8a8a8a" stroke-width="1.9" stroke-linecap="round" stroke-linejoin="round" />
<path d="M1231.5 475.0A43.3 43.3 0 1 0 1144.9 475.0A43.3 43.3 0 1 0 1231.5 475.0ZM1206.7 475.0A18.5 18.5 0 1 1 1169.7 475.0A18.5 18.5 0 1 1 1206.7 475.0Z" fill="#1aab7b" fill-opacity="0.85" fill-rule="evenodd"/>
<circle cx="1188.2" cy="475.0" r="48" fill="none" stroke="#909090" stroke-width="1.1"/>
<path d="M1188.2 425.5V524.5M1138.7 475.0H1237.7" stroke="#8c8c8c" stroke-width="2" fill="none"/>
<path d="M1188.2 427.0L1140.2 474.0M1236.2 476.0L1188.2 523.0" stroke="#8c8c8c" stroke-width="1.6" fill="none"/>
<path d="M715.500 697V708M715 702.500H958.500M954.500 697V702.500M958.500 702.500V708" stroke="#000" stroke-width="1" fill="none" shape-rendering="crispEdges"/>
</svg>
<!-- description panel -->
<div class="a" style="left:71px;top:728px;width:632px;height:168px;background:#fff;border:1px solid #828282;border-bottom:none"></div>
<!-- technologies table -->
<div class="a" style="left:548px;top:735px;width:150px;height:50px;background:#8e8e8e"></div>
<div class="a" style="left:549px;top:736px;width:148px;height:48px;background:#ababab"></div>
<div class="a" style="left:550px;top:737px;width:81px;height:14px;background:#d2d2d2;border:1px solid #909090;box-sizing:border-box"></div>
<div class="a" style="left:633px;top:737px;width:63px;height:14px;background:#d2d2d2;border:1px solid #909090;box-sizing:border-box"></div>
<div class="a" style="left:550px;top:753px;width:81px;height:14px;background:#eeeeee;border:1px solid #909090;box-sizing:border-box"></div>
<div class="a" style="left:633px;top:753px;width:63px;height:14px;background:#eeeeee;border:1px solid #909090;box-sizing:border-box"></div>
<div class="a" style="left:550px;top:769px;width:81px;height:14px;background:#eeeeee;border:1px solid #909090;box-sizing:border-box"></div>
<div class="a" style="left:633px;top:769px;width:63px;height:14px;background:#eeeeee;border:1px solid #909090;box-sizing:border-box"></div>
<!-- package list -->
<div class="a" style="left:710px;top:718px;width:716px;height:91px;background:#eeeeee;border:1px solid #0f93d6"></div>
<div class="a" style="left:711px;top:719px;width:716px;height:20px;background:#fff"></div>
<div class="a" style="left:859px;top:719px;width:1px;height:20px;background:#e2e2e2"></div>
<div class="a" style="left:891px;top:719px;width:1px;height:20px;background:#e2e2e2"></div>
<div class="a" style="left:943px;top:719px;width:1px;height:20px;background:#e2e2e2"></div>
<div class="a" style="left:711px;top:739px;width:716px;height:16px;background:#0894d8"></div>
<div class="a" style="left:732px;top:739px;width:126px;height:15px;border:1px dotted #e8a070"></div>
<svg style="left:0;top:0" width="1433" height="923" viewBox="0 0 1433 923">
<path d="M781.500 723.500L785.500 719.500L789.500 723.500" fill="none" stroke="#555" stroke-width="1"/>
<path d="M947.200 746.800L950.400 750L958.600 742.400" fill="none" stroke="#2ea043" stroke-width="2.300"/>
<path d="M947.200 762.800L950.400 766L958.600 758.400" fill="none" stroke="#1fa346" stroke-width="2.300"/>
<!-- buttons -->
<rect x="710.500" y="817.500" width="355" height="25" rx="4" fill="#fff" stroke="#8c8c8c"/>
<rect x="1072.500" y="817.500" width="355" height="25" rx="4" fill="#fff" stroke="#8c8c8c"/>
<rect x="710.500" y="849.500" width="355" height="25" rx="4" fill="#fff" stroke="#8c8c8c"/>
<path d="M1057.300 828H1062.700L1060 832.300Z" fill="#555"/>
<!-- Q field (sunken) -->
<rect x="1072" y="849" width="356" height="26" fill="#fff"/>
<rect x="1072" y="849" width="355" height="25" fill="#a0a0a0"/>
<rect x="1074" y="851" width="353" height="23" fill="#eeeeee"/>
<!-- radios -->
<circle cx="958.600" cy="888.700" r="7.300" fill="#fff" stroke="#7a7a7a" stroke-width="1"/>
<circle cx="958.600" cy="888.700" r="2.800" fill="#6a6a6a"/>
<circle cx="1200.700" cy="888.700" r="7.300" fill="#fff" stroke="#7a7a7a" stroke-width="1"/>
<!-- status bar -->
<path d="M0 897.500H1432" stroke="#828282" stroke-width="1"/>
<path d="M1376.500 899V921M1387.500 899V921M1413.500 899V921" stroke="#dcdcdc" stroke-width="1"/>
</svg>

<!-- texts -->
<div class="t" style="left:31.00px;top:6.02px;font-size:11.5px;font-weight:400;color:#fff;letter-spacing:-0.267px;">1 D:¥DATE¥E-work¥_Eagle mmLibrary05_01_00¥H_Q_2SK_SC-67[GDS].lbr (2SK*.dev) - EAGLE 9.4.2 standard</div>
<div class="t" style="left:5.50px;top:37.00px;font-size:13px;font-weight:400;color:#383838;letter-spacing:-0.351px;">File</div>
<div class="t" style="left:36.60px;top:37.00px;font-size:13px;font-weight:400;color:#383838;letter-spacing:-0.269px;">Edit</div>
<div class="t" style="left:69.40px;top:37.00px;font-size:13px;font-weight:400;color:#383838;letter-spacing:-0.248px;">Draw</div>
<div class="t" style="left:109.50px;top:37.00px;font-size:13px;font-weight:400;color:#383838;letter-spacing:-0.118px;">View</div>
<div class="t" style="left:147.40px;top:37.00px;font-size:13px;font-weight:400;color:#383838;letter-spacing:0.308px;">Library</div>
<div class="t" style="left:199.70px;top:37.00px;font-size:13px;font-weight:400;color:#383838;letter-spacing:-0.052px;">Options</div>
<div class="t" style="left:253.70px;top:37.00px;font-size:13px;font-weight:400;color:#383838;letter-spacing:0.000px;transform:scaleX(0.9449);transform-origin:0 0;">Window</div>
<div class="t" style="left:307.70px;top:37.00px;font-size:13px;font-weight:400;color:#383838;letter-spacing:-0.350px;">Help</div>
<div class="t" style="left:289.60px;top:73.02px;font-size:10.9px;font-weight:700;color:#fff;letter-spacing:0.000px;transform:scaleX(0.71);transform-origin:0 0">SCR</div>
<div class="t" style="left:324.60px;top:73.02px;font-size:10.9px;font-weight:700;color:#fff;letter-spacing:0.000px;transform:scaleX(0.75);transform-origin:0 0">ULP</div>
<div class="t" style="left:668.20px;top:72.88px;font-size:9px;font-weight:700;color:#e2e2e2;letter-spacing:0.000px;transform:scaleX(0.9418);transform-origin:0 0;">GO</div>
<div class="t" style="left:715.60px;top:72.75px;font-size:14px;font-weight:700;color:#444;letter-spacing:0.000px;">?</div>
<div class="t" style="left:782.50px;top:69.48px;font-size:9px;font-weight:700;color:#444;letter-spacing:0.000px;transform:scaleX(0.8981);transform-origin:0 0;">DESIGN</div>
<div class="t" style="left:782.50px;top:77.08px;font-size:9px;font-weight:700;color:#444;letter-spacing:-0.333px;">LINK</div>
<div class="t" style="left:838.50px;top:73.34px;font-size:12px;font-weight:400;color:#222;letter-spacing:-0.021px;">[bin/LTspice.svg]</div>
<div class="t" style="left:973.50px;top:74.64px;font-size:12px;font-weight:700;color:#222;letter-spacing:0.000px;transform:scaleX(0.9398);transform-origin:0 0;">PADS</div>
<div class="t" style="left:100.00px;top:113.84px;font-size:12px;font-weight:400;color:#222;letter-spacing:0.000px;transform:scaleX(0.8993);transform-origin:0 0;">Layer:</div>
<div class="t" style="left:172.00px;top:113.84px;font-size:12px;font-weight:400;color:#222;letter-spacing:0.000px;transform:scaleX(0.9250);transform-origin:0 0;">94 Symbols</div>
<div class="t" style="left:78.50px;top:151.02px;font-size:11.5px;font-weight:400;color:#222;letter-spacing:-0.254px;">0.1 inch (0.8 0.1)</div>
<div class="t" style="left:201.50px;top:151.02px;font-size:11.5px;font-weight:400;color:#7a7a7a;letter-spacing:0.014px;">Click to activate command line mode. Hint: Assign keyboard shortcut to “SET TOGGLE_CLI;” command</div>
<div class="t" style="left:44.40px;top:367.54px;font-size:10px;font-weight:700;color:#333;letter-spacing:0.000px;transform:scaleX(1.0940);transform-origin:0 0;">R2</div>
<div class="t" style="left:44.80px;top:377.88px;font-size:9px;font-weight:400;color:#c4c4c4;letter-spacing:0.000px;transform:scaleX(0.9231);transform-origin:0 0;">10k</div>
<div class="t" style="left:824.00px;top:687.53px;font-size:10px;font-weight:400;color:#000;letter-spacing:0.000px;transform:scaleX(0.9445);transform-origin:0 0;">5mm</div>
<div class="t" style="left:825.50px;top:698.03px;font-size:10px;font-weight:400;color:#000;letter-spacing:0.000px;transform:scaleX(0.8991);transform-origin:0 0;">0.2in</div>
<div class="t" style="left:78.20px;top:730.42px;font-size:11.5px;font-weight:700;color:#0000ee;letter-spacing:0.523px;text-decoration:underline">Description</div>
<div class="t" style="left:78.50px;top:766.42px;font-size:11.5px;font-weight:400;color:#222;letter-spacing:-0.311px;">Keyword = 2SK2232</div>
<div class="t" style="left:78.20px;top:779.02px;font-size:11.5px;font-weight:400;color:#0000ee;letter-spacing:0.580px;text-decoration:underline">[A]/non </div>
<div class="t" style="left:78.20px;top:790.82px;font-size:11.5px;font-weight:400;color:#0000ee;letter-spacing:0.408px;text-decoration:underline">[K]/non </div>
<div class="t" style="left:78.20px;top:802.82px;font-size:11.5px;font-weight:400;color:#0000ee;letter-spacing:0.420px;text-decoration:underline">[M]/non </div>
<div class="t" style="left:78.20px;top:814.52px;font-size:11.5px;font-weight:400;color:#0000ee;letter-spacing:0.408px;text-decoration:underline">[S]/non </div>
<div class="t" style="left:78.20px;top:826.62px;font-size:11.5px;font-weight:400;color:#0000ee;letter-spacing:0.115px;text-decoration:underline">[Data Sheet] </div>
<div class="t" style="left:551.20px;top:733.42px;font-size:11.5px;font-weight:700;color:#0000ee;letter-spacing:0.456px;text-decoration:underline">Technologies</div>
<div class="t" style="left:634.80px;top:733.42px;font-size:11.5px;font-weight:700;color:#0000ee;letter-spacing:0.599px;text-decoration:underline">Attributes</div>
<div class="t" style="left:551.60px;top:749.82px;font-size:11.5px;font-weight:400;color:#222;letter-spacing:0.000px;transform:scaleX(0.9086);transform-origin:0 0;">2SK2232</div>
<div class="t" style="left:551.60px;top:765.72px;font-size:11.5px;font-weight:400;color:#222;letter-spacing:0.000px;transform:scaleX(0.9086);transform-origin:0 0;">2SK2382</div>
<div class="t" style="left:715.60px;top:718.62px;font-size:11.5px;font-weight:400;color:#222;letter-spacing:0.000px;transform:scaleX(0.9293);transform-origin:0 0;">Package</div>
<div class="t" style="left:896.40px;top:718.62px;font-size:11.5px;font-weight:400;color:#222;letter-spacing:0.001px;">Variant</div>
<div class="t" style="left:734.60px;top:736.62px;font-size:11.5px;font-weight:400;color:#fff;letter-spacing:0.000px;transform:scaleX(0.9091);transform-origin:0 0;">H_Q_2SK_SC-67[GDS]</div>
<div class="t" style="left:896.00px;top:736.62px;font-size:11.5px;font-weight:400;color:#fff;letter-spacing:0.000px;">"</div>
<div class="t" style="left:734.60px;top:752.62px;font-size:11.5px;font-weight:400;color:#222;letter-spacing:0.000px;transform:scaleX(0.8938);transform-origin:0 0;">H_Q_2SK_SC-67[GDS]_S</div>
<div class="t" style="left:895.40px;top:752.62px;font-size:11.5px;font-weight:400;color:#222;letter-spacing:0.000px;transform:scaleX(0.7529);transform-origin:0 0;">_S</div>
<div class="t" style="left:875.50px;top:820.02px;font-size:11.5px;font-weight:400;color:#222;letter-spacing:0.000px;transform:scaleX(0.8473);transform-origin:0 0;">New</div>
<div class="t" style="left:1228.50px;top:820.02px;font-size:11.5px;font-weight:400;color:#222;letter-spacing:-0.224px;">Connect</div>
<div class="t" style="left:872.50px;top:852.02px;font-size:11.5px;font-weight:400;color:#222;letter-spacing:0.119px;">Prefix</div>
<div class="t" style="left:1076.90px;top:852.02px;font-size:11.5px;font-weight:400;color:#222;letter-spacing:0.000px;">Q</div>
<div class="t" style="left:710.00px;top:879.02px;font-size:11.5px;font-weight:400;color:#222;letter-spacing:-0.016px;">Value</div>
<div class="t" style="left:973.20px;top:879.02px;font-size:11.5px;font-weight:400;color:#222;letter-spacing:-0.170px;">Off</div>
<div class="t" style="left:1214.80px;top:879.02px;font-size:11.5px;font-weight:400;color:#222;letter-spacing:0.000px;transform:scaleX(0.8603);transform-origin:0 0;">On</div>
</body></html>
